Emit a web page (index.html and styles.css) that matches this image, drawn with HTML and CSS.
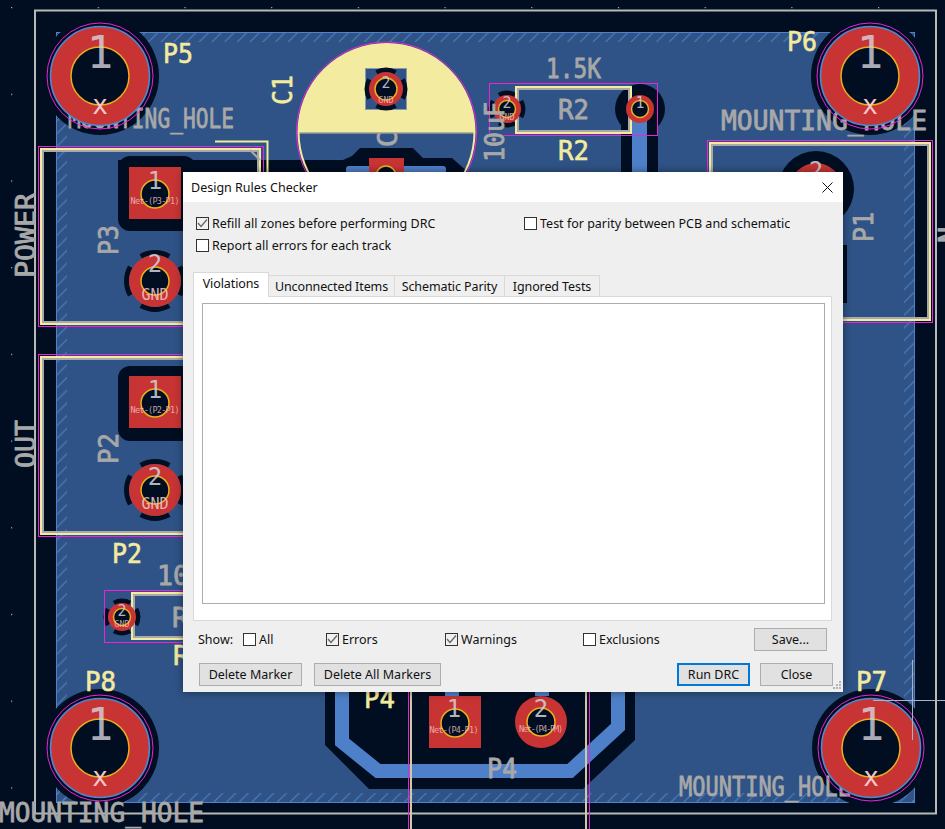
FILE: index.html
```html
<!DOCTYPE html>
<html>
  <head>
    <title>Design Rules Checker</title>
    <link rel="stylesheet" href="styles.css">
  </head>
  <body>
    <svg class="board" viewBox="0 0 945 829" width="945" height="829">
      <defs>
        <pattern id="grid" x="11" y="7" width="86.7" height="86.7" patternUnits="userSpaceOnUse">
          <rect width="1.2" height="1.2" fill="#9fb0c0"/>
        </pattern>
        <pattern id="hatch" width="12.7" height="12.7" patternUnits="userSpaceOnUse">
          <path d="M-2 14.7 L14.7 -2 M-2 2 L2 -2 M10.7 14.7 L14.7 10.7" stroke="#4f82c8" stroke-width="1"/>
        </pattern>
        <clipPath id="cap-top"><rect x="290" y="36" width="194" height="97"/></clipPath>

        <g id="hole-big">
          <circle r="49.5" class="red" stroke="#4d8ad6" stroke-width="1.6"/>
          <circle r="53" class="magenta"/>
          <circle r="29" class="bore"/>
        </g>
        <g id="pad-round">
          <circle r="26" class="red"/>
          <circle r="14" class="bore"/>
        </g>
        <g id="pad-square">
          <rect x="-26" y="-27" width="52" height="52" class="red"/>
          <circle r="14" class="bore"/>
        </g>
        <g id="pad-small">
          <circle r="14" class="red"/>
          <circle r="8.5" class="bore"/>
        </g>
      </defs>

      <rect width="945" height="829" fill="#010e22"/>
      <rect width="945" height="829" fill="url(#grid)"/>
      <rect x="35" y="10.500" width="901" height="803" class="edge"/>

      <!-- copper zone -->
      <rect x="56.500" y="32.500" width="858" height="770" fill="#2f5386"/>
      <rect x="57" y="33" width="857" height="9" fill="url(#hatch)"/>
      <rect x="57" y="793" width="857" height="9" fill="url(#hatch)"/>
      <rect x="57" y="33" width="10" height="769" fill="url(#hatch)"/>
      <rect x="904" y="33" width="10" height="769" fill="url(#hatch)"/>
      <rect x="56.500" y="32.500" width="858" height="770" fill="none" stroke="#4f82c8"/>

      <!-- clearances -->
      <circle cx="100" cy="76" r="59" class="dark"/>
      <circle cx="870" cy="76" r="59" class="dark"/>
      <circle cx="100" cy="748" r="59" class="dark"/>
      <circle cx="871" cy="748" r="59" class="dark"/>
      <rect x="118" y="156" width="78" height="75" rx="12" class="dark"/>
      <rect x="118" y="160" width="180" height="14" class="dark"/>
      <rect x="118" y="366" width="78" height="75" rx="12" class="dark"/>
      <circle cx="816" cy="189" r="38" class="dark"/>
      <rect x="843" y="245" width="4" height="58" class="dark"/>
      <rect x="621" y="109" width="37" height="70" class="dark"/>
      <circle cx="640" cy="109" r="25" class="dark"/>
      <path d="M325 690 V745 L369 789 H583 L635 740 V690 Z" class="dark"/>

      <circle cx="155" cy="281" r="28.500" class="relief" pathLength="360"/>
      <circle cx="155" cy="490" r="28.500" class="relief" pathLength="360"/>
      <circle cx="507" cy="109" r="16" class="relief" pathLength="360"/>
      <circle cx="122" cy="617" r="16" class="relief" pathLength="360"/>

      <text x="68" y="128" class="fab" textLength="166" lengthAdjust="spacingAndGlyphs">MOUNTING_HOLE</text>
      <text x="721" y="130" class="fab" textLength="206" lengthAdjust="spacingAndGlyphs">MOUNTING_HOLE</text>
      <text x="679" y="796" class="fab" textLength="172" lengthAdjust="spacingAndGlyphs">MOUNTING_HOLE</text>

      <!-- C1 -->
      <circle cx="386.500" cy="132" r="89" fill="#2f5386"/>
      <text transform="translate(397 147) rotate(-90)" class="fab">C</text>
      <circle cx="386.500" cy="132" r="88" fill="#f3eb9f" clip-path="url(#cap-top)"/>
      <path d="M298 133 H475" stroke="#9a9f90" stroke-width="1.500"/>
      <rect x="365.500" y="68.500" width="41" height="41" fill="#2f5386" stroke="#8a9aa8"/>
      <circle cx="386" cy="89" r="19" class="relief" pathLength="360"/>
      <path d="M280 160 H343 L352 156 L360 148 H413 L423 158 H452 L470 174 H280 Z" class="dark"/>
      <circle cx="386.500" cy="132" r="88" fill="none" class="outline-fab"/>
      <circle cx="386.500" cy="132" r="90" class="magenta"/>
      <rect x="346" y="166" width="100" height="8" rx="3" class="track"/>
      <rect x="369" y="158" width="35" height="16" class="red"/>
      <circle cx="386" cy="176" r="10" class="bore"/>

      <!-- tracks -->
      <rect x="632" y="109" width="15" height="66" class="track"/>
      <path d="M342 690 V742 L378 771 H570 L618 727 V690" fill="none" stroke="#4d80c8" stroke-width="14"/>
      <rect x="445" y="690" width="14" height="6" class="track"/>
      <rect x="535" y="690" width="14" height="6" class="track"/>

      <!-- outlines -->
      <rect x="38.500" y="146.500" width="225" height="180" class="magenta"/>
      <rect x="41" y="149" width="219" height="175" class="silk-line"/>
      <rect x="43" y="151" width="215" height="171" class="fab-line"/>
      <path d="M215 141.500 H267.500 V175" class="silk-line"/>
      <path d="M250 150 L260 160" class="fab-line"/>

      <rect x="38.500" y="354.500" width="225" height="182" class="magenta"/>
      <rect x="41" y="357" width="219" height="177" class="silk-line"/>
      <rect x="43" y="359" width="215" height="173" class="fab-line"/>

      <rect x="707.500" y="140.500" width="225" height="182" class="magenta"/>
      <rect x="710" y="143" width="220" height="177" class="silk-line"/>
      <rect x="712" y="145" width="216" height="173" class="fab-line"/>

      <rect x="516" y="87" width="115" height="46" class="silk-line"/>
      <rect x="518" y="89" width="111" height="42" class="fab-line"/>
      <rect x="489.500" y="83.500" width="168" height="52" class="magenta"/>

      <rect x="104.500" y="590.500" width="160" height="52" class="magenta"/>
      <rect x="132" y="593" width="130" height="46" class="silk-line"/>
      <rect x="134" y="595" width="126" height="42" class="fab-line"/>

      <path d="M411 692 V829 M586 692 V829" class="fab-line"/>
      <path d="M411 692 V829 M586 692 V829" class="core-line"/>
      <path d="M408.500 692 V829 M589.500 692 V829" class="magenta"/>

      <!-- pads -->
      <use href="#hole-big" x="100" y="76"/>
      <use href="#hole-big" x="870" y="76"/>
      <use href="#hole-big" x="100" y="748"/>
      <use href="#hole-big" x="871" y="748"/>
      <use href="#pad-square" x="155" y="194"/>
      <use href="#pad-round" x="155" y="281"/>
      <use href="#pad-square" x="155" y="403"/>
      <use href="#pad-round" x="155" y="490"/>
      <use href="#pad-round" x="816" y="189"/>
      <use href="#pad-square" x="455" y="723"/>
      <use href="#pad-round" x="541" y="722"/>
      <use href="#pad-small" x="507" y="109"/>
      <use href="#pad-small" x="640" y="109"/>
      <use href="#pad-small" x="122" y="617"/>
      <circle cx="386" cy="89" r="17" class="red"/>
      <circle cx="386" cy="89" r="11" class="bore"/>

      <!-- pad numbers and nets -->
      <text x="100" y="68" class="num-big">1</text>
      <text x="870" y="68" class="num-big">1</text>
      <text x="100" y="740" class="num-big">1</text>
      <text x="871" y="740" class="num-big">1</text>
      <text x="100" y="114" class="cross">x</text>
      <text x="870" y="114" class="cross">x</text>
      <text x="100" y="786" class="cross">x</text>
      <text x="871" y="786" class="cross">x</text>

      <text x="155" y="189" class="num">1</text>
      <text x="155" y="204" class="net" textLength="49">Net-(P3-P1)</text>
      <text x="155" y="272" class="num">2</text>
      <text x="155" y="300" class="gnd">GND</text>
      <text x="155" y="398" class="num">1</text>
      <text x="155" y="413" class="net" textLength="49">Net-(P2-P1)</text>
      <text x="155" y="485" class="num">2</text>
      <text x="155" y="509" class="gnd">GND</text>
      <text x="454" y="717" class="num">1</text>
      <text x="454" y="733" class="net" textLength="49">Net-(P4-P1)</text>
      <text x="541" y="717" class="num">2</text>
      <text x="541" y="732" class="net" textLength="44">Net-(P4-PM)</text>
      <text x="816" y="179" class="num">2</text>
      <text x="386" y="88" class="num-small">2</text>
      <text x="386" y="103" class="net">GND</text>
      <text x="507" y="108" class="num-small">2</text>
      <text x="507" y="120" class="net">GND</text>
      <text x="640" y="108" class="num-small">1</text>
      <text x="122" y="616" class="num-small">2</text>
      <text x="122" y="627" class="net">GND</text>

      <!-- reference and value text -->
      <text x="163" y="63" class="silk" textLength="30" lengthAdjust="spacingAndGlyphs">P5</text>
      <text x="787" y="51" class="silk" textLength="30" lengthAdjust="spacingAndGlyphs">P6</text>
      <text x="112" y="563" class="silk" textLength="30" lengthAdjust="spacingAndGlyphs">P2</text>
      <text x="85" y="691" class="silk" textLength="31" lengthAdjust="spacingAndGlyphs">P8</text>
      <text x="856" y="691" class="silk" textLength="31" lengthAdjust="spacingAndGlyphs">P7</text>
      <text x="364" y="708" class="silk" textLength="31" lengthAdjust="spacingAndGlyphs">P4</text>
      <text x="558" y="160" class="silk" textLength="31" lengthAdjust="spacingAndGlyphs">R2</text>
      <text x="173" y="665" class="silk">R</text>
      <text transform="translate(292 105) rotate(-90)" class="silk" textLength="30" lengthAdjust="spacingAndGlyphs">C1</text>

      <text x="546" y="78" class="fab" textLength="55" lengthAdjust="spacingAndGlyphs">1.5K</text>
      <text x="558" y="119" class="fab" textLength="31" lengthAdjust="spacingAndGlyphs">R2</text>
      <text x="157" y="585" class="fab" textLength="32" lengthAdjust="spacingAndGlyphs">10</text>
      <text x="172" y="627" class="fab">R</text>
      <text x="487" y="778" class="fab" textLength="30" lengthAdjust="spacingAndGlyphs">P4</text>
      <text transform="translate(118 255) rotate(-90)" class="fab" textLength="30" lengthAdjust="spacingAndGlyphs">P3</text>
      <text transform="translate(118 464) rotate(-90)" class="fab" textLength="31" lengthAdjust="spacingAndGlyphs">P2</text>
      <text transform="translate(873 242) rotate(-90)" class="fab" textLength="30" lengthAdjust="spacingAndGlyphs">P1</text>
      <text transform="translate(504 162) rotate(-90)" class="fab" textLength="60" lengthAdjust="spacingAndGlyphs">10uF</text>
      <text transform="translate(35 278) rotate(-90)" class="fab" textLength="85" lengthAdjust="spacingAndGlyphs">POWER</text>
      <text transform="translate(35 468) rotate(-90)" class="fab" textLength="48" lengthAdjust="spacingAndGlyphs">OUT</text>
      <text transform="translate(958 243) rotate(-90)" class="fab">N</text>
      <text x="-1" y="822" class="fab" textLength="205" lengthAdjust="spacingAndGlyphs">MOUNTING_HOLE</text>

      <path d="M912.500 660 V740 M873 700.500 H945" stroke="#aab4c0" stroke-width="1"/>
    </svg>

    <div class="dialog">
      <div class="titlebar">
        <span>Design Rules Checker</span>
        <svg class="close-x" viewBox="0 0 11 11" width="11" height="11">
          <path d="M0.500 0.500 L10.500 10.500 M10.500 0.500 L0.500 10.500" stroke="#111" fill="none"/>
        </svg>
      </div>

      <div class="options">
        <label class="check">
          <span class="box on"><svg viewBox="0 0 11 11"><path d="M1 5 L4 8.500 L10 1.500"/></svg></span>Refill all zones before performing DRC
        </label>
        <label class="check">
          <span class="box"></span>Test for parity between PCB and schematic
        </label>
        <label class="check">
          <span class="box"></span>Report all errors for each track
        </label>
      </div>

      <div class="tabs">
        <div class="tab active">Violations</div>
        <div class="tab w-unconnected">Unconnected Items</div>
        <div class="tab w-parity">Schematic Parity</div>
        <div class="tab w-ignored">Ignored Tests</div>
      </div>
      <div class="panel">
        <div class="list"></div>
      </div>

      <div class="show-row">
        <span class="show-label">Show:</span>
        <label class="check col-all"><span class="box"></span>All</label>
        <label class="check col-errors">
          <span class="box on"><svg viewBox="0 0 11 11"><path d="M1 5 L4 8.500 L10 1.500"/></svg></span>Errors
        </label>
        <label class="check col-warnings">
          <span class="box on"><svg viewBox="0 0 11 11"><path d="M1 5 L4 8.500 L10 1.500"/></svg></span>Warnings
        </label>
        <label class="check col-exclusions"><span class="box"></span>Exclusions</label>
        <button class="btn btn-save">Save...</button>
      </div>

      <div class="button-row">
        <button class="btn btn-marker">Delete Marker</button>
        <button class="btn btn-markers">Delete All Markers</button>
        <button class="btn btn-run">Run DRC</button>
        <button class="btn btn-close">Close</button>
      </div>

      <svg class="grip" viewBox="0 0 10 10" width="10" height="10">
        <path d="M7 1h2v2h-2z M4 4h2v2h-2z M7 4h2v2h-2z M1 7h2v2h-2z M4 7h2v2h-2z M7 7h2v2h-2z" fill="#b4b4b4"/>
      </svg>
    </div>
  </body>
</html>
```

FILE: styles.css
```css
html, body {
    margin: 0;
    padding: 0;
}
body {
    background-color: #010e22;
    height: 829px;
    overflow: hidden;
    position: relative;
    width: 945px;
}

/* board */
.board {
    display: block;
}
.board text {
    font-family: "DejaVu Sans Mono", monospace;
}
.edge {
    fill: none;
    stroke: #b6b9b4;
    stroke-width: 2;
}
.dark {
    fill: #010e22;
}
.red {
    fill: #c83434;
}
.bore {
    fill: #010e22;
    stroke: #e8b01e;
    stroke-width: 1.5;
}
.magenta {
    fill: none;
    stroke: #f020d8;
    stroke-width: 1;
}
.track {
    fill: #4d80c8;
}
.relief {
    fill: none;
    stroke: #010e22;
    stroke-dasharray: 60 30;
    stroke-dashoffset: 30;
    stroke-width: 5;
}
.outline-fab {
    stroke: #f3eb9f;
    stroke-width: 2;
}
.silk-line {
    fill: none;
    stroke: #f3eb9f;
    stroke-width: 2;
}
.fab-line {
    fill: none;
    stroke: #a9a9a9;
    stroke-width: 2;
}
.core-line {
    fill: none;
    stroke: #f3eb9f;
    stroke-width: 1;
}
.board .silk {
    fill: #f3eb9f;
    font-size: 27px;
    stroke: #f3eb9f;
    stroke-width: 0.6;
}
.board .fab {
    fill: #a8a8a8;
    font-size: 27px;
    stroke: #a8a8a8;
    stroke-width: 0.8;
}
.board .num-big {
    fill: #d8d8e0;
    fill-opacity: 0.8;
    font-size: 44px;
    text-anchor: middle;
}
.board .cross {
    fill: #f4c8c8;
    font-size: 26px;
    text-anchor: middle;
}
.board .num {
    fill: #d0d4dc;
    fill-opacity: 0.85;
    font-size: 24px;
    text-anchor: middle;
}
.board .num-small {
    fill: #d0d4dc;
    fill-opacity: 0.85;
    font-size: 15px;
    text-anchor: middle;
}
.board .gnd {
    fill: #f0c4c4;
    fill-opacity: 0.9;
    font-size: 15px;
    text-anchor: middle;
}
.board .net {
    fill: #f0c4c4;
    fill-opacity: 0.8;
    font-size: 8.500px;
    text-anchor: middle;
}

/* dialog */
.dialog {
    background-color: #efefef;
    box-shadow: 0 0 8px rgba(0, 0, 0, 0.45);
    color: #111;
    font-family: "Noto Sans", sans-serif;
    font-size: 12.500px;
    height: 520px;
    left: 183px;
    position: absolute;
    top: 172px;
    width: 660px;
}
.titlebar {
    align-items: center;
    background-color: #fff;
    display: flex;
    height: 30px;
    justify-content: space-between;
    padding: 0 10px 0 8px;
}
.options {
    display: grid;
    grid-template-columns: 328px auto;
    grid-auto-rows: 22px;
    padding: 15px 0 0 13px;
}
.check {
    align-items: center;
    display: flex;
    height: 13px;
    line-height: 13px;
}
.box {
    background-color: #fff;
    border: 1px solid #333;
    box-sizing: border-box;
    display: block;
    flex: none;
    height: 13px;
    margin-right: 3px;
    width: 13px;
}
.box.on {
    background-color: #f0f0f0;
}
.box svg {
    display: block;
    height: 11px;
    width: 11px;
}
.box path {
    fill: none;
    stroke: #666;
    stroke-width: 1.300;
}

.tabs {
    align-items: flex-end;
    display: flex;
    height: 25px;
    letter-spacing: -0.1px;
    margin: 11px 0 0 10px;
    position: relative;
    z-index: 1;
}
.tab {
    align-items: center;
    border: 1px solid #d9d9d9;
    border-left: 0;
    box-sizing: border-box;
    display: flex;
    height: 22px;
    justify-content: center;
}
.tab.active {
    background-color: #fff;
    border-bottom: 0;
    border-left: 1px solid #d9d9d9;
    height: 25px;
    padding-bottom: 3px;
    width: 76px;
}
.w-unconnected {
    width: 126px;
}
.w-parity {
    width: 110px;
}
.w-ignored {
    width: 95px;
}
.panel {
    background-color: #fff;
    border: 1px solid #d9d9d9;
    box-sizing: border-box;
    height: 325px;
    margin: -1px 0 0 10px;
    padding: 6px 6px 16px 8px;
    width: 639px;
}
.list {
    border: 1px solid #acacac;
    box-sizing: border-box;
    height: 100%;
}

.show-row {
    align-items: center;
    display: flex;
    height: 23px;
    margin: 7px 16px 0 15px;
}
.show-label {
    width: 45px;
}
.col-all {
    width: 83px;
}
.col-errors {
    width: 119px;
}
.col-warnings {
    width: 138px;
}
.col-exclusions {
    flex: 1;
}
.button-row {
    display: flex;
    height: 23px;
    margin: 12px 10px 0 16px;
}
.btn {
    background-color: #e1e1e1;
    border: 1px solid #adadad;
    box-sizing: border-box;
    color: #111;
    font-family: inherit;
    font-size: inherit;
    height: 23px;
    padding: 0;
}
.btn-save,
.btn-run,
.btn-close {
    width: 73px;
}
.btn-marker {
    width: 103px;
}
.btn-markers {
    margin-left: 12px;
    width: 127px;
}
.btn-run {
    border: 2px solid #0078d7;
    margin-left: auto;
}
.btn-close {
    margin-left: 10px;
}
.grip {
    bottom: 2px;
    position: absolute;
    right: 1px;
}
```
